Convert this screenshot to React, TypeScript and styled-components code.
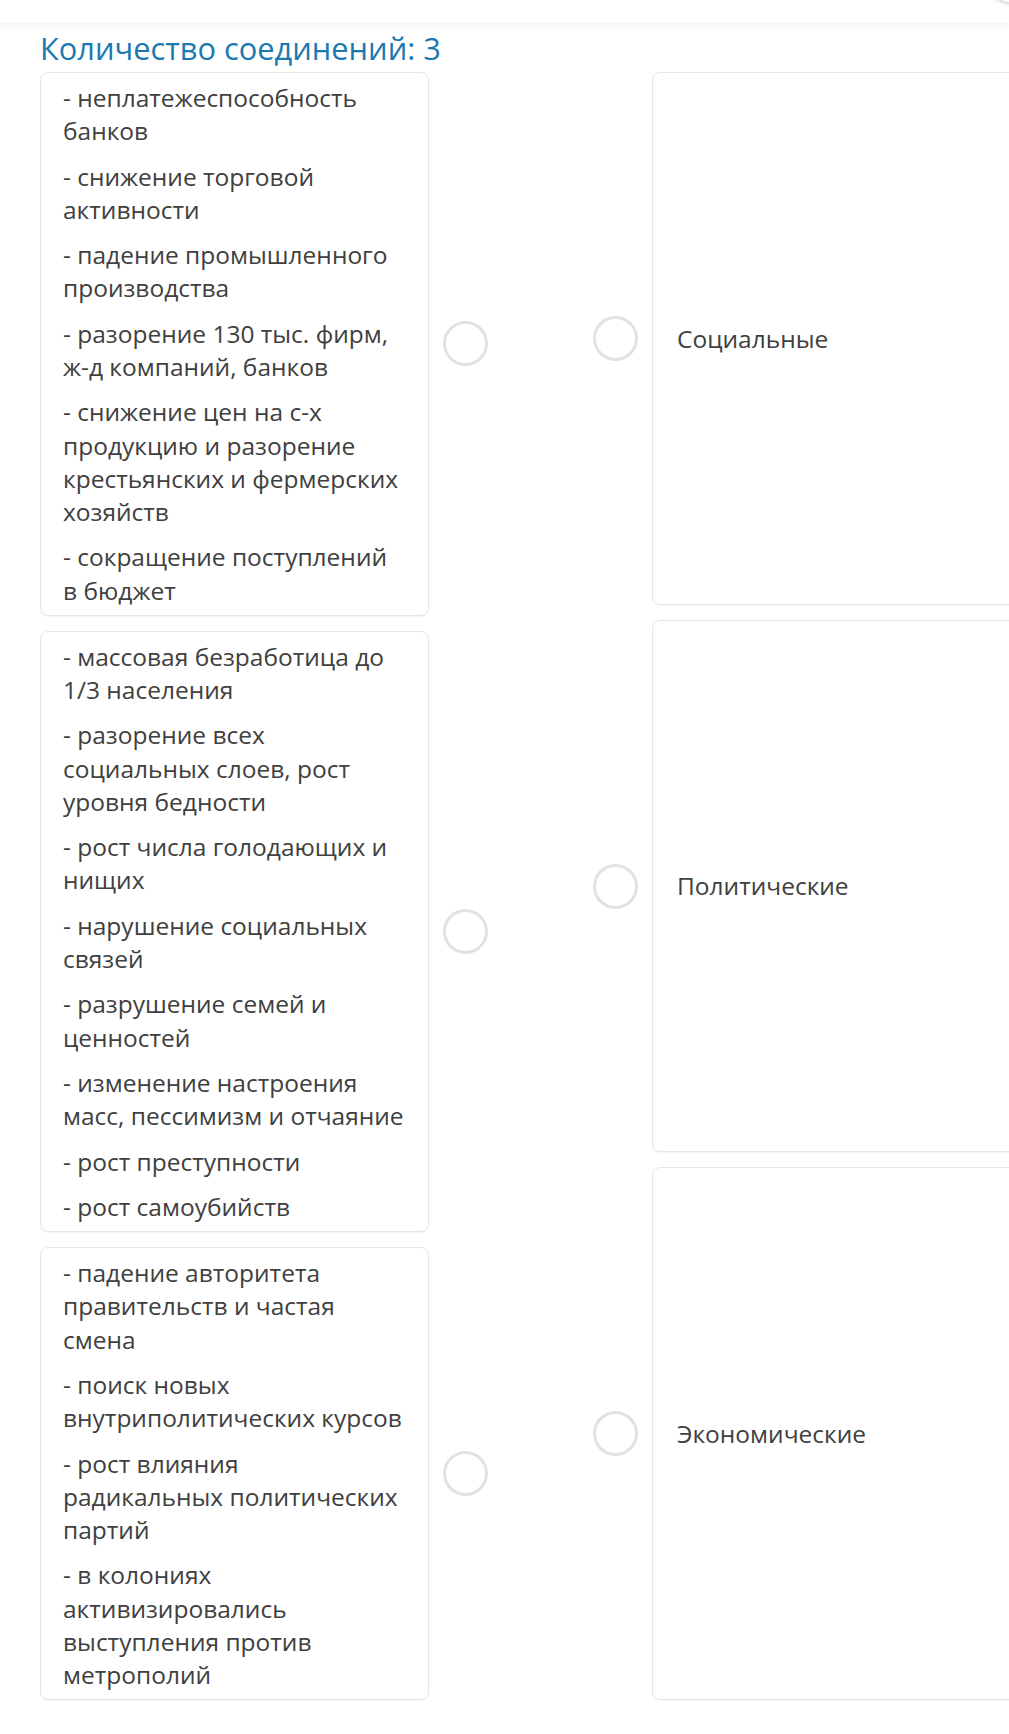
import { createGlobalStyle, styled } from 'styled-components'

const GlobalStyle = createGlobalStyle`
  html, body {
    margin: 0;
    padding: 0;
    background: #ffffff;
  }
  body {
    font-family: 'Open Sans', 'Noto Sans', Arial, sans-serif;
    color: #404040;
    overflow-x: hidden;
  }
`

type Group = {
  items: string[]
}

const leftGroups: Group[] = [
  {
    items: [
      '- неплатежеспособность банков',
      '- снижение торговой активности',
      '- падение промышленного производства',
      '- разорение 130 тыс. фирм, ж-д компаний, банков',
      '- снижение цен на с-х продукцию и разорение крестьянских и фермерских хозяйств',
      '- сокращение поступлений в бюджет',
    ],
  },
  {
    items: [
      '- массовая безработица до 1/3 населения',
      '- разорение всех социальных слоев, рост уровня бедности',
      '- рост числа голодающих и нищих',
      '- нарушение социальных связей',
      '- разрушение семей и ценностей',
      '- изменение настроения масс, пессимизм и отчаяние',
      '- рост преступности',
      '- рост самоубийств',
    ],
  },
  {
    items: [
      '- падение авторитета правительств и частая смена',
      '- поиск новых внутриполитических курсов',
      '- рост влияния радикальных политических партий',
      '- в колониях активизировались выступления против метрополий',
    ],
  },
]

const rightOptions = ['Социальные', 'Политические', 'Экономические']

export default function App() {
  return (
    <Page>
      <GlobalStyle />
      <TopBar>
        <CornerButton />
      </TopBar>
      <Content>
        <Title>Количество соединений: 3</Title>
        <Board>
          <LeftColumn>
            {leftGroups.map((group, i) => (
              <LeftRow key={i}>
                <Card>
                  {group.items.map((item) => (
                    <Item key={item}>{item}</Item>
                  ))}
                </Card>
                <Dot />
              </LeftRow>
            ))}
          </LeftColumn>
          <RightColumn>
            {rightOptions.map((label) => (
              <RightRow key={label}>
                <Dot />
                <OptionCard>
                  <OptionText>{label}</OptionText>
                </OptionCard>
              </RightRow>
            ))}
          </RightColumn>
        </Board>
      </Content>
    </Page>
  )
}

const Page = styled.div`
  width: 100%;
  min-height: 1734px;
  overflow: hidden;
`

const TopBar = styled.div`
  height: 23px;
  display: flex;
  justify-content: flex-end;
  background: #ffffff;
  box-shadow: 0 3px 8px rgba(0, 0, 0, 0.06);
  overflow: hidden;
`

const CornerButton = styled.div`
  width: 64px;
  height: 64px;
  margin-top: -61px;
  margin-right: -38px;
  border-radius: 50%;
  background: #ffffff;
  box-shadow: 0 1px 4px rgba(0, 0, 0, 0.25);
`

const Content = styled.div`
  padding: 5px 0 0 40px;
`

const Title = styled.h1`
  margin: 0 0 4px;
  font-size: 30.8px;
  line-height: 40px;
  font-weight: 400;
  color: #1c78b1;
`

const Board = styled.div`
  display: flex;
  align-items: stretch;
  gap: 105px;
`

const LeftColumn = styled.div`
  display: flex;
  flex-direction: column;
  gap: 15px;
`

const LeftRow = styled.div`
  display: flex;
  align-items: center;
  gap: 14px;
`

const Card = styled.div`
  box-sizing: border-box;
  width: 389px;
  padding: 8px 23.7px 8px 22px;
  display: flex;
  flex-direction: column;
  gap: 12.2px;
  border: 1px solid #e4e7e9;
  border-radius: 8px;
  background: #ffffff;
  box-shadow: 0 1px 1px rgba(0, 0, 0, 0.04);
`

const Item = styled.p`
  margin: 0;
  font-size: 24.5px;
  line-height: 33.2px;
  color: #404040;
`

const Dot = styled.div`
  flex: none;
  box-sizing: border-box;
  width: 45px;
  height: 45px;
  border: 3px solid #dfe3e5;
  border-radius: 50%;
  background: #ffffff;
`

const RightColumn = styled.div`
  display: flex;
  flex-direction: column;
  gap: 15px;
`

const RightRow = styled.div`
  flex: 1 1 0;
  display: flex;
  align-items: center;
  gap: 14px;
`

const OptionCard = styled.div`
  box-sizing: border-box;
  align-self: stretch;
  width: 389px;
  padding: 0 24px;
  display: flex;
  align-items: center;
  border: 1px solid #e4e7e9;
  border-radius: 8px;
  background: #ffffff;
  box-shadow: 0 1px 1px rgba(0, 0, 0, 0.04);
`

const OptionText = styled.span`
  font-size: 24.5px;
  line-height: 33.2px;
  color: #404040;
`
